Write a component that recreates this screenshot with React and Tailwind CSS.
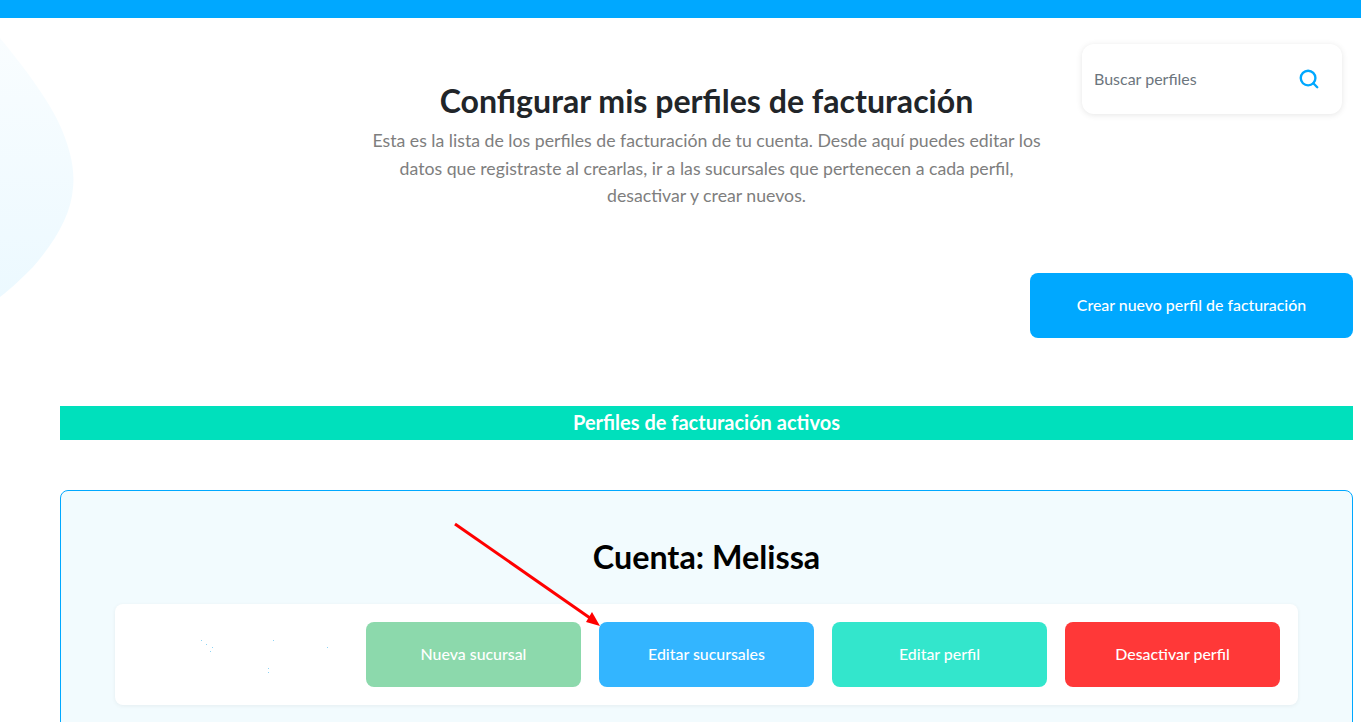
import { Search } from 'lucide-react';

const actions = [
  { label: 'Nueva sucursal', color: 'bg-[#8cd9ac]' },
  { label: 'Editar sucursales', color: 'bg-[#33b5ff]' },
  { label: 'Editar perfil', color: 'bg-[#33e6cc]' },
  { label: 'Desactivar perfil', color: 'bg-[#ff3838]' },
];

// leftover specks of the blurred-out logo
const specks = [
  [86, 36], [91, 40], [97, 43], [95, 47], [158, 36], [212, 43], [153, 64], [153, 68],
];

function App() {
  return (
    <div className="relative h-[722px] overflow-hidden bg-white font-['Lato',sans-serif]">
      {/* background blob */}
      <svg className="absolute left-0 top-[18px]" width="80" height="290" viewBox="0 0 80 290">
        <defs>
          <linearGradient id="blob" x1="0" y1="0" x2="0" y2="1">
            <stop offset="0" stopColor="#f9fdff" />
            <stop offset="1" stopColor="#ecf9ff" />
          </linearGradient>
        </defs>
        <path d="M0 20 C18 42 50 82 62 112 C70 132 75 150 73 170 C71 195 58 220 33 249 C24 258 12 270 0 279 Z" fill="url(#blob)" />
      </svg>

      <div className="h-[18px] bg-[#00a8ff]" />

      <div className="relative pl-[60px] pr-2">
        <div className="grid grid-cols-[1fr_700px_1fr]">
          <div />
          <div className="pt-[64px] text-center">
            <h1 className="text-[32.1px] font-bold leading-[38px] text-[#212529]">
              Configurar mis perfiles de facturación
            </h1>
            <p className="mx-auto mt-[7px] w-[680px] text-[17.7px] leading-[27.5px] text-[#7e7e7e]">
              Esta es la lista de los perfiles de facturación de tu cuenta. Desde aquí puedes editar los datos que registraste al crearlas, ir a las sucursales que pertenecen a cada perfil, desactivar y crear nuevos.
            </p>
          </div>
          <div className="flex justify-end pr-[11px] pt-[26px]">
            <div className="flex h-[70px] w-[260px] items-center justify-between self-start rounded-xl bg-white pl-3 pr-[22px] shadow-[0_1px_6px_rgba(0,0,0,0.1)]">
              <span className="text-[16px] text-[#6c757d]">Buscar perfiles</span>
              <Search className="h-[22px] w-[22px] text-[#00a8ff]" strokeWidth={2.6} />
            </div>
          </div>
        </div>

        <div className="mt-[63px] flex justify-end">
          <button className="h-[65px] w-[323px] rounded-lg bg-[#00a8ff] text-[15.9px] font-medium text-white">
            Crear nuevo perfil de facturación
          </button>
        </div>

        <div className="mt-[68px] flex h-[34px] items-center justify-center bg-[#00e0bc] pb-px text-[20px] font-bold text-white">
          Perfiles de facturación activos
        </div>

        <div className="mt-[50px] h-[300px] rounded-lg border border-[#00a8ff] bg-[#f2fbfe] px-[54px]">
          <h2 className="pt-[45px] text-center text-[32.3px] font-bold leading-[42px] text-black">Cuenta: Melissa</h2>
          <div className="mt-[26px] flex h-[101px] items-center rounded-lg bg-white pr-[18px] shadow-[0_1px_4px_rgba(0,0,0,0.06)]">
            <svg className="shrink-0" width="251" height="101" viewBox="0 0 251 101">
              {specks.map(([x, y]) => (
                <rect key={`${x}-${y}`} x={x} y={y} width="1" height="1" fill="#8fd4f5" />
              ))}
            </svg>
            <div className="flex gap-[18px]">
              {actions.map((action) => (
                <button
                  key={action.label}
                  className={`h-[65px] w-[215px] rounded-lg text-[15.9px] font-medium text-white ${action.color}`}
                >
                  {action.label}
                </button>
              ))}
            </div>
          </div>
        </div>
      </div>

      {/* red annotation arrow */}
      <svg className="absolute left-0 top-0" width="1361" height="722" viewBox="0 0 1361 722">
        <line x1="455" y1="524" x2="590" y2="618" stroke="#ff0000" strokeWidth="3" />
        <path d="M600 626 L586 622 L592 612 Z" fill="#ff0000" />
      </svg>
    </div>
  );
}

export default App;
